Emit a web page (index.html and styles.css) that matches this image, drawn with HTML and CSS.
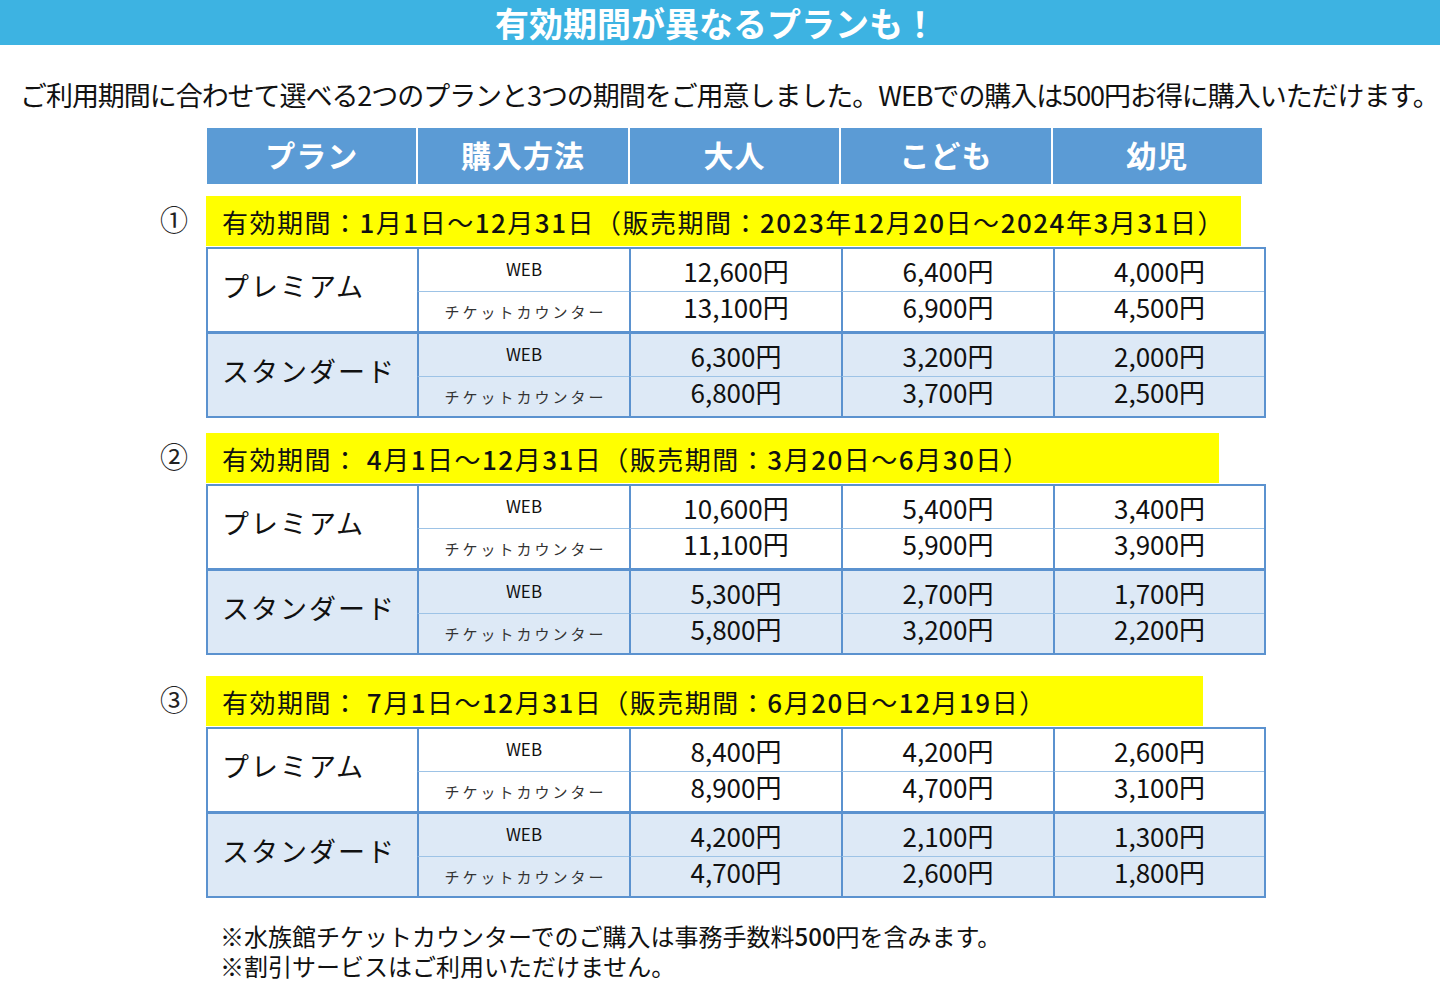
FILE: index.html
```html
<!DOCTYPE html>
<html lang="ja">
<head>
<meta charset="utf-8">
<title>有効期間が異なるプランも！</title>
<link rel="stylesheet" href="styles.css">
</head>
<body>
<header class="banner"><h1>有効期間が異なるプランも！</h1></header>
<p class="intro">ご利用期間に合わせて選べる2つのプランと3つの期間をご用意しました。WEBでの購入は500円お得に購入いただけます。</p>
<main class="main">
  <div class="colhead">
    <div class="hcell">プラン</div>
    <div class="hcell">購入方法</div>
    <div class="hcell">大人</div>
    <div class="hcell">こども</div>
    <div class="hcell">幼児</div>
  </div>

  <section class="period period-1">
    <div class="period-title">
      <span class="num">①</span>
      <span class="label label-1">有効期間：<span class="n">1</span>月<span class="n">1</span>日～<span class="n">12</span>月<span class="n">31</span>日（販売期間：<span class="n">2023</span>年<span class="n">12</span>月<span class="n">20</span>日～<span class="n">2024</span>年<span class="n">3</span>月<span class="n">31</span>日）</span>
    </div>
    <div class="ptable">
      <div class="plan premium">
        <div class="pname">プレミアム</div>
        <div class="cell method top">WEB</div>
        <div class="cell price top">12,600円</div>
        <div class="cell price top">6,400円</div>
        <div class="cell price top">4,000円</div>
        <div class="cell method counter">チケットカウンター</div>
        <div class="cell price">13,100円</div>
        <div class="cell price">6,900円</div>
        <div class="cell price">4,500円</div>
      </div>
      <div class="plan standard">
        <div class="pname">スタンダード</div>
        <div class="cell method top">WEB</div>
        <div class="cell price top">6,300円</div>
        <div class="cell price top">3,200円</div>
        <div class="cell price top">2,000円</div>
        <div class="cell method counter">チケットカウンター</div>
        <div class="cell price">6,800円</div>
        <div class="cell price">3,700円</div>
        <div class="cell price">2,500円</div>
      </div>
    </div>
  </section>

  <section class="period period-2">
    <div class="period-title">
      <span class="num">②</span>
      <span class="label label-2">有効期間：&nbsp;<span class="n">4</span>月<span class="n">1</span>日～<span class="n">12</span>月<span class="n">31</span>日（販売期間：<span class="n">3</span>月<span class="n">20</span>日～<span class="n">6</span>月<span class="n">30</span>日）</span>
    </div>
    <div class="ptable">
      <div class="plan premium">
        <div class="pname">プレミアム</div>
        <div class="cell method top">WEB</div>
        <div class="cell price top">10,600円</div>
        <div class="cell price top">5,400円</div>
        <div class="cell price top">3,400円</div>
        <div class="cell method counter">チケットカウンター</div>
        <div class="cell price">11,100円</div>
        <div class="cell price">5,900円</div>
        <div class="cell price">3,900円</div>
      </div>
      <div class="plan standard">
        <div class="pname">スタンダード</div>
        <div class="cell method top">WEB</div>
        <div class="cell price top">5,300円</div>
        <div class="cell price top">2,700円</div>
        <div class="cell price top">1,700円</div>
        <div class="cell method counter">チケットカウンター</div>
        <div class="cell price">5,800円</div>
        <div class="cell price">3,200円</div>
        <div class="cell price">2,200円</div>
      </div>
    </div>
  </section>

  <section class="period period-3">
    <div class="period-title">
      <span class="num">③</span>
      <span class="label label-3">有効期間：&nbsp;<span class="n">7</span>月<span class="n">1</span>日～<span class="n">12</span>月<span class="n">31</span>日（販売期間：<span class="n">6</span>月<span class="n">20</span>日～<span class="n">12</span>月<span class="n">19</span>日）</span>
    </div>
    <div class="ptable">
      <div class="plan premium">
        <div class="pname">プレミアム</div>
        <div class="cell method top">WEB</div>
        <div class="cell price top">8,400円</div>
        <div class="cell price top">4,200円</div>
        <div class="cell price top">2,600円</div>
        <div class="cell method counter">チケットカウンター</div>
        <div class="cell price">8,900円</div>
        <div class="cell price">4,700円</div>
        <div class="cell price">3,100円</div>
      </div>
      <div class="plan standard">
        <div class="pname">スタンダード</div>
        <div class="cell method top">WEB</div>
        <div class="cell price top">4,200円</div>
        <div class="cell price top">2,100円</div>
        <div class="cell price top">1,300円</div>
        <div class="cell method counter">チケットカウンター</div>
        <div class="cell price">4,700円</div>
        <div class="cell price">2,600円</div>
        <div class="cell price">1,800円</div>
      </div>
    </div>
  </section>

  <div class="notes">
    <p>※水族館チケットカウンターでのご購入は事務手数料<span class="n">500</span>円を含みます。</p>
    <p>※割引サービスはご利用いただけません。</p>
  </div>
</main>
</body>
</html>
```

FILE: styles.css
```css
* { box-sizing: border-box; }

body {
  margin: 0;
  background: #ffffff;
  color: #111111;
  font-family: "Noto Sans CJK JP", "Noto Sans", sans-serif;
}

.banner {
  height: 45px;
  background: #3db3e2;
  display: flex;
  justify-content: center;
  align-items: center;
}

.banner h1 {
  margin: 0 0 0 -8px;
  font-size: 34px;
  line-height: 45px;
  font-weight: 700;
  color: #ffffff;
  letter-spacing: 0;
}

.intro {
  margin: 30px 0 0 0;
  padding-left: 20px;
  font-size: 27px;
  line-height: 40px;
  letter-spacing: -1.05px;
  white-space: nowrap;
  color: #111111;
}

.main {
  margin-top: 13px;
  padding-left: 160px;
}

.colhead {
  margin-left: 47px;
  width: 1055px;
  height: 56px;
  display: grid;
  grid-template-columns: repeat(5, 1fr);
  gap: 2px;
  background: #ffffff;
}

.hcell {
  background: #5b9bd5;
  color: #ffffff;
  font-size: 30px;
  font-weight: 700;
  display: flex;
  align-items: center;
  justify-content: center;
  letter-spacing: 1px;
  padding-bottom: 4px;
}

.period-1 { margin-top: 12px; }
.period-2 { margin-top: 15px; }
.period-3 { margin-top: 21px; }

.period-title {
  display: flex;
  align-items: center;
  height: 50px;
}

.num {
  width: 46px;
  font-size: 28px;
  line-height: 1;
  color: #222222;
  margin-bottom: 4px;
}

.label {
  height: 50px;
  display: flex;
  align-items: center;
  padding-left: 16px;
  background: #ffff00;
  font-size: 26px;
  letter-spacing: 1.5px;
  white-space: nowrap;
  color: #111111;
}

.label-1 { width: 1035px; }
.label-2 { width: 1013px; }
.label-3 { width: 997px; }

.n { font-weight: 500; }

.ptable {
  margin-left: 46px;
  margin-top: 1px;
  width: 1060px;
  border: 2px solid #5b92cf;
}

.plan {
  display: grid;
  grid-template-columns: 209px 212px 212px 212px 211px;
  grid-template-rows: 43px 39px;
}

.plan + .plan { border-top: 3px solid #5b92cf; }

.premium { background: #ffffff; }
.standard { background: #dde9f6; }

.pname {
  grid-row: 1 / span 2;
  display: flex;
  align-items: center;
  padding-left: 14px;
  padding-bottom: 9px;
  font-size: 27px;
  letter-spacing: 2px;
  color: #111111;
}

.cell {
  display: flex;
  align-items: center;
  justify-content: center;
  border-left: 2px solid #5b92cf;
}

.cell.top { border-bottom: 1px solid #9dc3e6; }

.method.top {
  font-size: 17px;
  padding-bottom: 3px;
}

.method.counter {
  font-size: 15px;
  letter-spacing: 3px;
  padding-left: 3px;
  color: #333333;
}

.price {
  font-size: 26px;
}

.price.top { padding-top: 1px; }
.price:not(.top) { padding-bottom: 11px; }

.notes {
  margin-top: 23px;
  padding-left: 60px;
}

.notes p {
  margin: 0;
  font-size: 24px;
  line-height: 30px;
  color: #111111;
}
```
